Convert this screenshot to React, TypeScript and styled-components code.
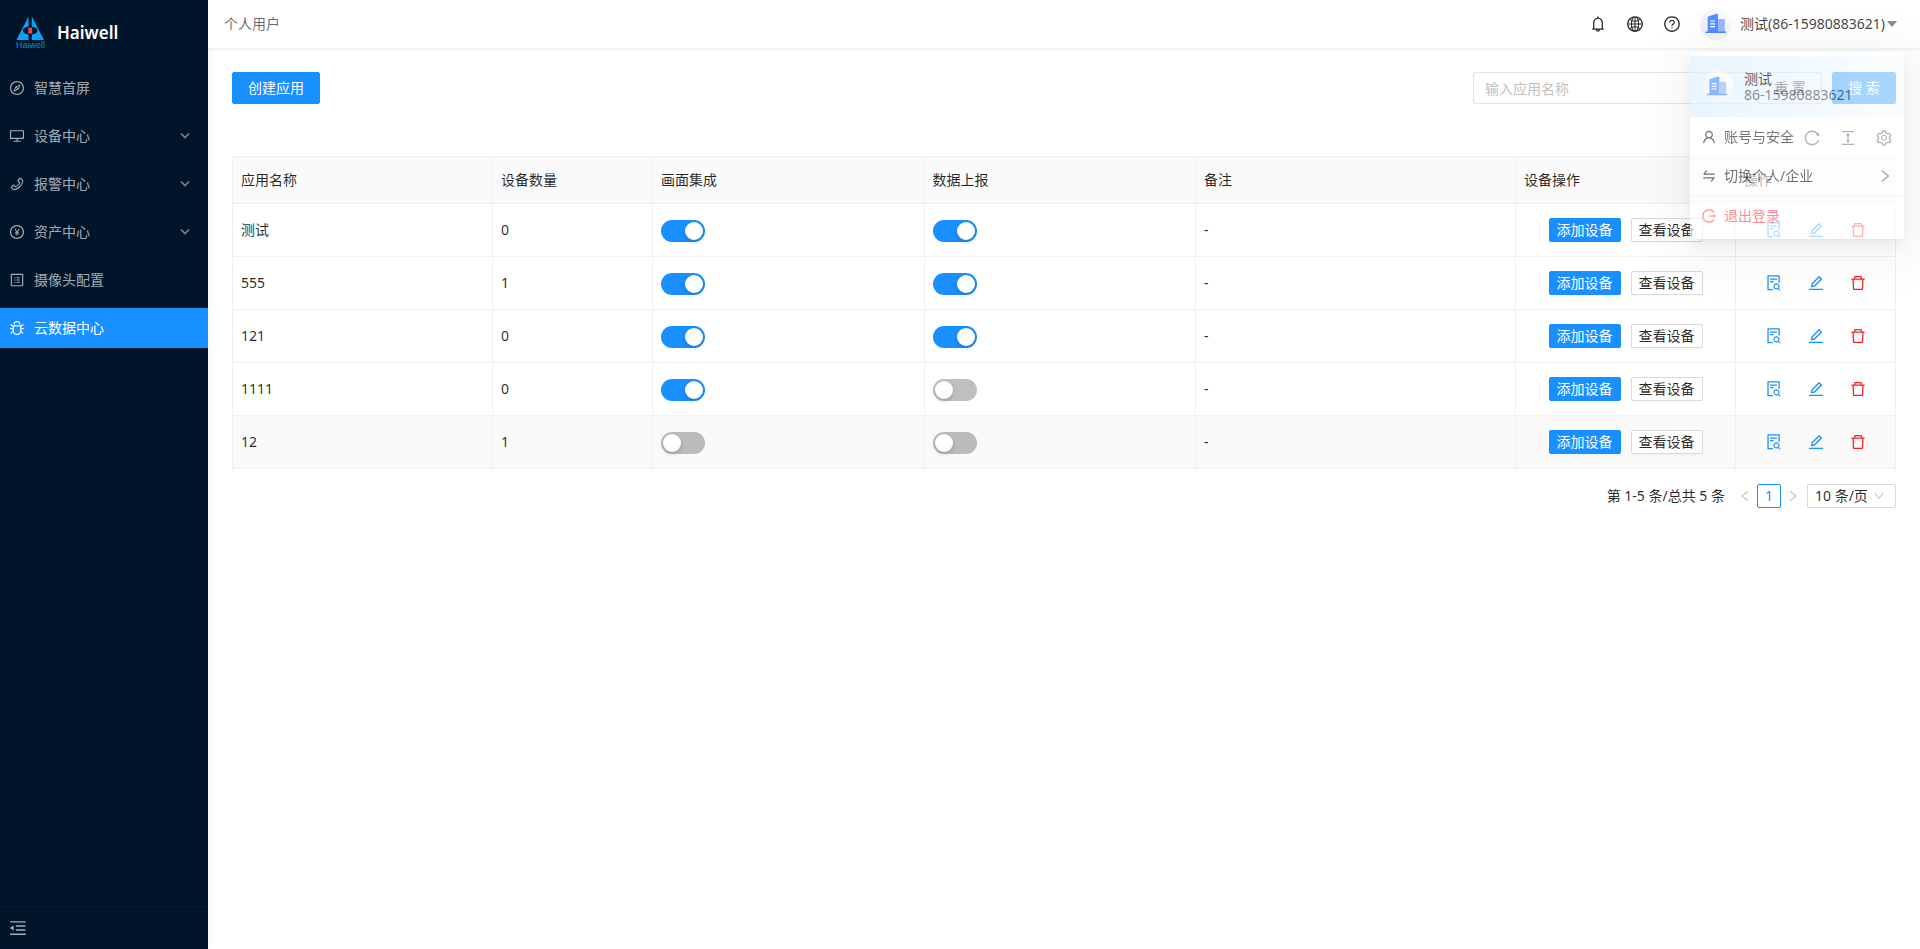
import React from 'react';
import styled, { createGlobalStyle, css } from 'styled-components';
import {
  AiFillCaretDown,
  AiOutlineBell,
  AiOutlineBug,
  AiOutlineColumnHeight,
  AiOutlineCompass,
  AiOutlineDelete,
  AiOutlineDesktop,
  AiOutlineDown,
  AiOutlineEdit,
  AiOutlineFileSearch,
  AiOutlineGlobal,
  AiOutlineLeft,
  AiOutlineLogout,
  AiOutlineMenuFold,
  AiOutlinePayCircle,
  AiOutlinePhone,
  AiOutlineProfile,
  AiOutlineQuestionCircle,
  AiOutlineReload,
  AiOutlineRight,
  AiOutlineSetting,
  AiOutlineSwap,
  AiOutlineUser,
} from 'react-icons/ai';

const primary = '#1890ff';
const danger = '#f5222d';
const line = '#f0f0f0';

const GlobalStyle = createGlobalStyle`
  *, *::before, *::after { box-sizing: border-box; }
  body {
    margin: 0;
    background: #fff;
    color: rgba(0, 0, 0, 0.85);
    font-family: 'Noto Sans', 'Noto Sans CJK SC', sans-serif;
    font-size: 14px;
    line-height: 22px;
  }
  button, input, select { font: inherit; color: inherit; margin: 0; }
  button { cursor: pointer; }
  svg { display: block; flex: none; }
`;

const Layout = styled.div`
  display: flex;
  min-height: 100vh;
`;

/* ---------- sidebar ---------- */

const Sidebar = styled.aside`
  display: flex;
  flex-direction: column;
  flex: none;
  width: 208px;
  background: #001529;
  color: rgba(255, 255, 255, 0.65);
  box-shadow: 2px 0 8px rgba(29, 35, 41, 0.05);
`;

const Brand = styled.a`
  display: flex;
  align-items: center;
  gap: 10px;
  height: 64px;
  padding: 2px 16px 0;
  color: #fff;
  font-size: 17px;
  font-weight: 600;
  text-decoration: none;
`;

const Menu = styled.nav`
  display: flex;
  flex-direction: column;
  flex: 1;
  gap: 8px;
  padding-top: 4px;
`;

const MenuItem = styled.a<{ $active?: boolean }>`
  display: flex;
  align-items: center;
  gap: 9px;
  height: 40px;
  padding: 0 18px 0 9px;
  color: ${(p) => (p.$active ? '#fff' : 'inherit')};
  background: ${(p) => (p.$active ? primary : 'transparent')};
  text-decoration: none;
`;

const MenuLabel = styled.span`
  flex: 1;
`;

const FoldButton = styled.button`
  display: flex;
  align-items: center;
  height: 40px;
  padding: 0 8px 3px;
  border: 0;
  border-top: 1px solid #000c17;
  background: none;
`;

/* ---------- header ---------- */

const Page = styled.div`
  display: flex;
  flex-direction: column;
  flex: 1;
  min-width: 0;
`;

const Header = styled.header`
  position: relative;
  z-index: 2;
  display: flex;
  align-items: center;
  justify-content: space-between;
  height: 48px;
  padding: 0 16px;
  background: #fff;
  box-shadow: 0 1px 4px rgba(0, 21, 41, 0.08);
`;

const Crumb = styled.span`
  color: rgba(0, 0, 0, 0.6);
`;

const HeaderTools = styled.div`
  display: flex;
  align-items: center;
  gap: 19px;
`;

const IconButton = styled.button<{ $color?: string }>`
  display: flex;
  padding: 0;
  border: 0;
  background: none;
  color: ${(p) => p.$color || 'inherit'};
`;

const UserArea = styled.div`
  position: relative;
`;

const UserTrigger = styled.button`
  display: flex;
  align-items: center;
  height: 48px;
  padding: 0 5px 0 0;
  border: 0;
  background: none;
`;

const UserName = styled.span`
  margin-left: 8px;
  color: rgba(0, 0, 0, 0.75);
`;

const Caret = styled(AiFillCaretDown)`
  color: #8c8c8c;
`;

/* ---------- user dropdown, half faded in ---------- */

const Dropdown = styled.div`
  position: absolute;
  top: 52px;
  right: 0;
  width: 214px;
  padding: 4px 0;
  border-radius: 4px;
  background: #fff;
  opacity: 0.65;
  box-shadow: 0 3px 6px -4px rgba(0, 0, 0, 0.12), 0 6px 16px rgba(0, 0, 0, 0.08),
    0 9px 56px 16px rgba(0, 0, 0, 0.08);
`;

const Profile = styled.div`
  display: flex;
  align-items: center;
  gap: 11px;
  height: 61px;
  padding: 0 12px;
  background: linear-gradient(90deg, #dcf0ff, #f8fcff);
  line-height: 16px;
`;

const ProfileName = styled.div`
  color: #000;
`;

const ProfilePhone = styled.div`
  color: rgba(0, 0, 0, 0.7);
`;

const DropItem = styled.button<{ $danger?: boolean; $divided?: boolean }>`
  display: flex;
  align-items: center;
  gap: 7px;
  width: 100%;
  height: ${(p) => (p.$divided ? '40px' : '39px')};
  padding: 0 11px;
  border: 0;
  border-top: ${(p) => (p.$divided ? `1px solid ${line}` : '0')};
  background: none;
  color: ${(p) => (p.$danger ? '#ff4d4f' : 'rgba(0, 0, 0, 0.85)')};
  text-align: left;
`;

const DropLabel = styled.span`
  flex: 1;
`;

const DropArrow = styled(AiOutlineRight)`
  color: rgba(0, 0, 0, 0.55);
`;

/* ---------- content ---------- */

const Content = styled.main`
  padding: 24px;
`;

const Toolbar = styled.div`
  display: flex;
  justify-content: space-between;
`;

const SearchForm = styled.form`
  display: flex;
  gap: 10px;
`;

const Button = styled.button<{ $primary?: boolean; $small?: boolean }>`
  min-width: 64px;
  height: ${(p) => (p.$small ? '24px' : '32px')};
  padding: ${(p) => (p.$small ? '0 7px' : '0 15px')};
  border: 1px solid ${(p) => (p.$primary ? primary : '#d9d9d9')};
  border-radius: 2px;
  background: ${(p) => (p.$primary ? primary : '#fff')};
  color: ${(p) => (p.$primary ? '#fff' : 'rgba(0, 0, 0, 0.85)')};
  line-height: 20px;
  white-space: nowrap;
  box-shadow: 0 2px 0 rgba(0, 0, 0, 0.02);
`;

const SearchInput = styled.input`
  width: 275px;
  height: 32px;
  padding: 0 11px;
  border: 1px solid #e4e4e4;
  border-radius: 2px;
  background: #fff;
  &::placeholder { color: #bfbfbf; opacity: 1; }
`;

const TableTools = styled.div`
  display: flex;
  align-items: center;
  justify-content: flex-end;
  gap: 18px;
  height: 36px;
  margin-top: 16px;
  padding-right: 3px;
`;

const Table = styled.table`
  width: 100%;
  table-layout: fixed;
  border-collapse: separate;
  border-spacing: 0;
  border: solid ${line};
  border-width: 1px 0 0 1px;
`;

const Col = styled.col<{ $width?: number }>`
  ${(p) => p.$width && css`width: ${p.$width}px;`}
`;

const Th = styled.th`
  height: 47px;
  padding: 0 8px;
  border: solid ${line};
  border-width: 0 1px 1px 0;
  background: #fafafa;
  font-weight: 400;
  text-align: left;
`;

const Tr = styled.tr<{ $hover?: boolean }>`
  background: ${(p) => (p.$hover ? '#fafafa' : '#fff')};
`;

const Td = styled.td`
  height: 53px;
  padding: 0 8px;
  border: solid ${line};
  border-width: 0 1px 1px 0;
`;

const Actions = styled.div<{ $gap: number }>`
  display: flex;
  align-items: center;
  justify-content: center;
  gap: ${(p) => p.$gap}px;
`;

const Switch = styled.input.attrs({ type: 'checkbox', role: 'switch' })`
  appearance: none;
  display: block;
  width: 44px;
  height: 22px;
  margin-top: 2px;
  padding: 2px;
  border-radius: 11px;
  background: rgba(0, 0, 0, 0.25);
  cursor: pointer;
  &::before {
    content: '';
    display: block;
    width: 18px;
    height: 18px;
    border-radius: 9px;
    background: #fff;
    box-shadow: 0 2px 4px rgba(0, 35, 11, 0.2);
  }
  &:checked { background: ${primary}; }
  &:checked::before { margin-left: 22px; }
`;

const Pagination = styled.nav`
  display: flex;
  align-items: center;
  justify-content: flex-end;
  margin-top: 15px;
`;

const Total = styled.span`
  margin-right: 8px;
`;

const PageButton = styled.button<{ $active?: boolean }>`
  display: flex;
  align-items: center;
  justify-content: center;
  width: 24px;
  height: 24px;
  padding: 0;
  border: 1px solid ${(p) => (p.$active ? primary : 'transparent')};
  border-radius: 2px;
  background: none;
  color: ${(p) => (p.$active ? primary : 'rgba(0, 0, 0, 0.25)')};
`;

const SizeBox = styled.label`
  position: relative;
  margin-left: 2px;
`;

const SizeSelect = styled.select`
  appearance: none;
  display: block;
  width: 89px;
  height: 24px;
  padding: 0 7px;
  border: 1px solid #d9d9d9;
  border-radius: 2px;
  background: #fff;
  line-height: 22px;
`;

const SizeArrow = styled(AiOutlineDown)`
  position: absolute;
  top: 6px;
  right: 11px;
  color: rgba(0, 0, 0, 0.25);
  pointer-events: none;
`;

/* ---------- drawings ---------- */

const Logo = () => (
  <svg width="31" height="34" viewBox="0 0 31 34" aria-hidden="true">
    <path d="M12.6 0.5 L12.6 10.8 Q7 11.5 7 14.5 Q7 18 12.6 18.6 L12.6 24 L0.4 24 Z" fill="#0aa4f6" />
    <path d="M15.8 0.5 L15.8 10.8 Q21.4 11.5 21.4 14.5 Q21.4 18 15.8 18.6 L15.8 24 L28 24 Z" fill="#0aa4f6" />
    <rect x="12.2" y="11.6" width="4" height="6" fill="#f0414b" />
    <text x="0" y="32" fontSize="9" fontWeight="400" fontFamily="Liberation Sans" fill="#0b8cd6">
      Haiwell
    </text>
  </svg>
);

const Avatar = ({ size }: { size: number }) => (
  <svg width={size} height={size} viewBox="0 0 32 32" aria-hidden="true">
    <defs>
      <linearGradient id="disc" x1="1" y1="0" x2="0" y2="1">
        <stop offset="0" stopColor="#fff" />
        <stop offset="1" stopColor="#ebebeb" />
      </linearGradient>
    </defs>
    <circle cx="16" cy="16" r="16" fill="url(#disc)" />
    <path d="M7.7 9.6 Q7.7 8.6 8.7 8.3 L16.6 5.8 Q18 5.4 18 6.8 V24 H7.7 Z" fill="#5290fd" />
    <path d="M18 11 H23.6 Q24.8 11 24.8 12.2 V24 H18 Z" fill="#95b8ff" />
    <rect x="5.2" y="23.4" width="21" height="1.6" rx="0.8" fill="#4c86f7" />
    <path d="M10 13 H15 M10 15.8 H15 M10 18.6 H15" stroke="#fff" strokeWidth="1.2" />
  </svg>
);

const Chevron = () => (
  <svg width="10" height="10" viewBox="0 0 10 10" opacity="0.75" aria-hidden="true">
    <path d="M1 2.5 L5 6.5 L9 2.5" fill="none" stroke="currentColor" strokeWidth="1.6" />
  </svg>
);

/* ---------- data ---------- */

const menu = [
  { label: '智慧首屏', Icon: AiOutlineCompass },
  { label: '设备中心', Icon: AiOutlineDesktop, nested: true },
  { label: '报警中心', Icon: AiOutlinePhone, nested: true },
  { label: '资产中心', Icon: AiOutlinePayCircle, nested: true },
  { label: '摄像头配置', Icon: AiOutlineProfile },
  { label: '云数据中心', Icon: AiOutlineBug, active: true },
];

const columns: { title: string; width?: number }[] = [
  { title: '应用名称', width: 260 },
  { title: '设备数量', width: 160 },
  { title: '画面集成' },
  { title: '数据上报' },
  { title: '备注', width: 320 },
  { title: '设备操作', width: 220 },
  { title: '操作', width: 160 },
];

const rows = [
  { name: '测试', devices: 0, screen: true, report: true },
  { name: '555', devices: 1, screen: true, report: true },
  { name: '121', devices: 0, screen: true, report: true },
  { name: '1111', devices: 0, screen: true, report: false },
  { name: '12', devices: 1, screen: false, report: false, hover: true },
];

export default function App() {
  return (
    <Layout>
      <GlobalStyle />
      <Sidebar>
        <Brand href="#">
          <Logo />
          Haiwell
        </Brand>
        <Menu>
          {menu.map(({ label, Icon, nested, active }) => (
            <MenuItem key={label} href="#" $active={active}>
              <Icon size={16} />
              <MenuLabel>{label}</MenuLabel>
              {nested && <Chevron />}
            </MenuItem>
          ))}
        </Menu>
        <FoldButton aria-label="收起菜单">
          <AiOutlineMenuFold size={20} />
        </FoldButton>
      </Sidebar>

      <Page>
        <Header>
          <Crumb>个人用户</Crumb>
          <HeaderTools>
            <IconButton aria-label="通知"><AiOutlineBell size={18} /></IconButton>
            <IconButton aria-label="语言"><AiOutlineGlobal size={18} /></IconButton>
            <IconButton aria-label="帮助"><AiOutlineQuestionCircle size={18} /></IconButton>
            <UserArea>
              <UserTrigger>
                <Avatar size={32} />
                <UserName>测试(86-15980883621)</UserName>
                <Caret size={14} />
              </UserTrigger>
              <Dropdown>
                <Profile>
                  <Avatar size={31} />
                  <div>
                    <ProfileName>测试</ProfileName>
                    <ProfilePhone>86-15980883621</ProfilePhone>
                  </div>
                </Profile>
                <DropItem>
                  <AiOutlineUser size={16} />
                  <DropLabel>账号与安全</DropLabel>
                </DropItem>
                <DropItem>
                  <AiOutlineSwap size={16} />
                  <DropLabel>切换个人/企业</DropLabel>
                  <DropArrow size={16} />
                </DropItem>
                <DropItem $danger $divided>
                  <AiOutlineLogout size={16} />
                  <DropLabel>退出登录</DropLabel>
                </DropItem>
              </Dropdown>
            </UserArea>
          </HeaderTools>
        </Header>

        <Content>
          <Toolbar>
            <Button $primary>创建应用</Button>
            <SearchForm onSubmit={(e) => e.preventDefault()}>
              <SearchInput placeholder="输入应用名称" aria-label="应用名称" />
              <Button type="reset">重 置</Button>
              <Button $primary type="submit">搜 索</Button>
            </SearchForm>
          </Toolbar>
          <TableTools>
            <IconButton aria-label="刷新"><AiOutlineReload size={18} /></IconButton>
            <IconButton aria-label="密度"><AiOutlineColumnHeight size={18} /></IconButton>
            <IconButton aria-label="列设置"><AiOutlineSetting size={18} /></IconButton>
          </TableTools>
          <Table>
            <colgroup>
              {columns.map((c) => (
                <Col key={c.title} $width={c.width} />
              ))}
            </colgroup>
            <thead>
              <tr>
                {columns.map((c) => (
                  <Th key={c.title}>{c.title}</Th>
                ))}
              </tr>
            </thead>
            <tbody>
              {rows.map((r) => (
                <Tr key={r.name} $hover={r.hover}>
                  <Td>{r.name}</Td>
                  <Td>{r.devices}</Td>
                  <Td><Switch defaultChecked={r.screen} aria-label="画面集成" /></Td>
                  <Td><Switch defaultChecked={r.report} aria-label="数据上报" /></Td>
                  <Td>-</Td>
                  <Td>
                    <Actions $gap={10}>
                      <Button $primary $small>添加设备</Button>
                      <Button $small>查看设备</Button>
                    </Actions>
                  </Td>
                  <Td>
                    <Actions $gap={24}>
                      <IconButton $color={primary} aria-label="详情"><AiOutlineFileSearch size={18} /></IconButton>
                      <IconButton $color={primary} aria-label="编辑"><AiOutlineEdit size={18} /></IconButton>
                      <IconButton $color={danger} aria-label="删除"><AiOutlineDelete size={18} /></IconButton>
                    </Actions>
                  </Td>
                </Tr>
              ))}
            </tbody>
          </Table>
          <Pagination aria-label="分页">
            <Total>第 1-5 条/总共 5 条</Total>
            <PageButton aria-label="上一页"><AiOutlineLeft size={14} /></PageButton>
            <PageButton $active>1</PageButton>
            <PageButton aria-label="下一页"><AiOutlineRight size={14} /></PageButton>
            <SizeBox>
              <SizeSelect aria-label="每页条数">
                <option>10 条/页</option>
              </SizeSelect>
              <SizeArrow size={12} />
            </SizeBox>
          </Pagination>
        </Content>
      </Page>
    </Layout>
  );
}
